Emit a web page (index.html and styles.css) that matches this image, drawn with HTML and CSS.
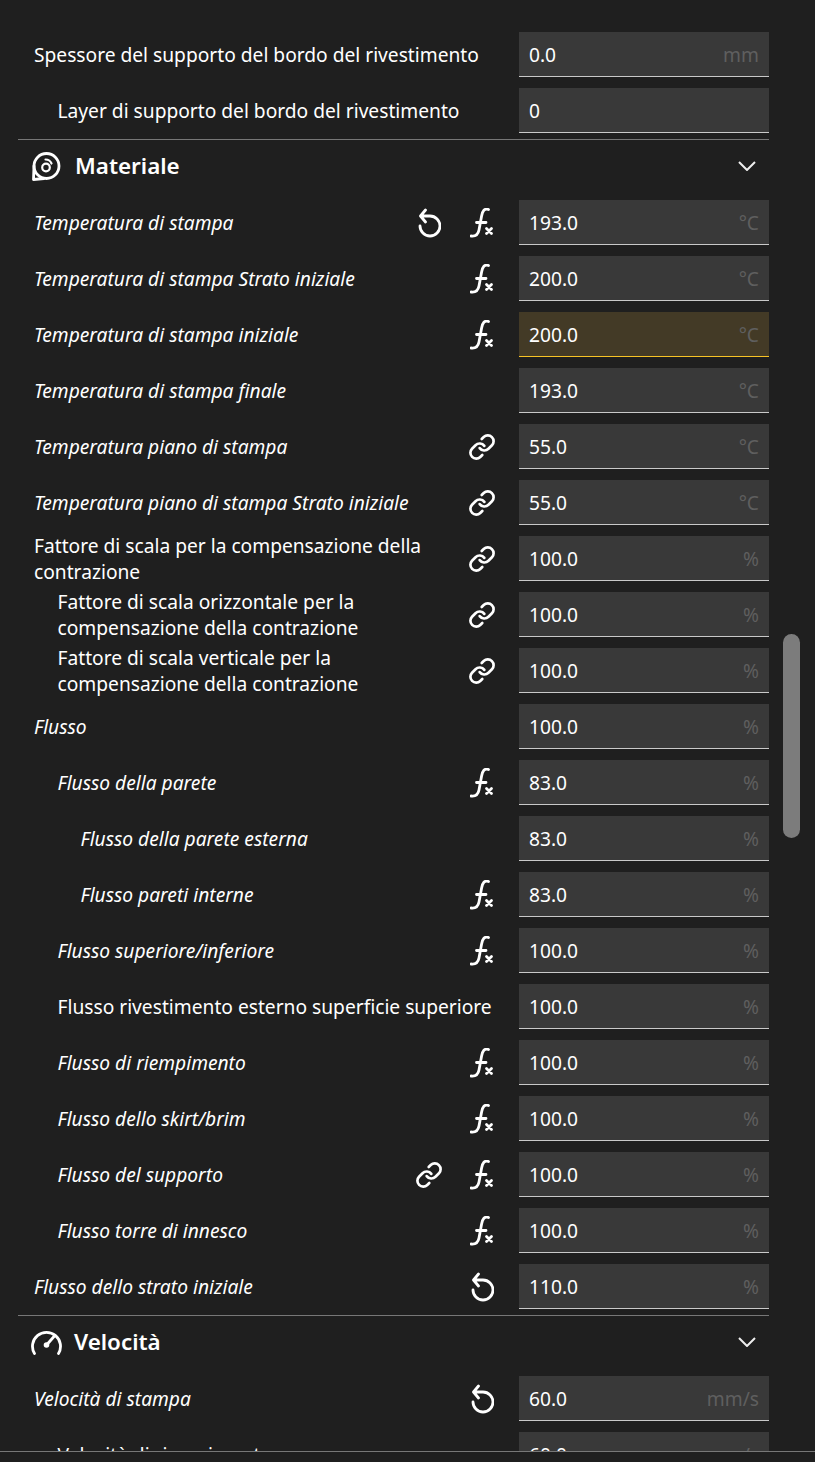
FILE: index.html
```html
<!DOCTYPE html>
<html lang="it">

<head>
    <meta charset="UTF-8">
    <meta name="viewport" content="width=device-width, initial-scale=1.0">
    <title>Impostazioni di stampa</title>
    <link rel="stylesheet" href="styles.css">
</head>

<body>
    <svg class="sprites" aria-hidden="true">
        <symbol id="i-reset" viewBox="0 0 24 30">
            <path d="M8.500 2 3.500 8 8.500 14M4 8H13A10 10 0 1 1 3 18" />
        </symbol>
        <symbol id="i-fx" viewBox="0 0 24 30">
            <path d="M18.500 1.500C14.500 0 12.500 3 11.600 8L9 22C8 27 5 28.500 1 28M6.500 14.500H16" />
            <path class="thick" d="M16.500 20.500 21.500 25.500M21.500 20.500 16.500 25.500" />
        </symbol>
        <symbol id="i-link" viewBox="0 0 24 24">
            <path d="M10 13a5 5 0 0 0 7.540.540l3-3a5 5 0 0 0-7.070-7.070l-1.720 1.710" />
            <path d="M14 11a5 5 0 0 0-7.540-.540l-3 3a5 5 0 0 0 7.070 7.070l1.710-1.710" />
        </symbol>
        <symbol id="i-chevron" viewBox="0 0 18 10">
            <path d="M1 1 9 9 17 1" />
        </symbol>
    </svg>

    <main class="panel">
        <div class="row">
            <span class="label">Spessore del supporto del bordo del rivestimento</span>
            <div class="field"><span>0.0</span><span class="unit">mm</span></div>
        </div>
        <div class="row depth-1">
            <span class="label">Layer di supporto del bordo del rivestimento</span>
            <div class="field"><span>0</span></div>
        </div>

        <div class="section-head">
            <svg class="head-icon" viewBox="0 0 32 32">
                <circle cx="16.500" cy="16" r="12.500" />
                <path d="M4 16 3.500 29.500 14 28.500" />
                <circle class="inner" cx="16" cy="17.500" r="3.800" />
                <path class="inner" d="M15.500 9.500C18.500 9.500 20.500 11 21.500 13.500" />
            </svg>
            <span class="head-title">Materiale</span>
            <svg class="chevron"><use href="#i-chevron" /></svg>
        </div>

        <div class="row changed">
            <span class="label">Temperatura di stampa</span>
            <div class="icons">
                <svg class="icon"><use href="#i-reset" /></svg>
                <svg class="icon"><use href="#i-fx" /></svg>
            </div>
            <div class="field"><span>193.0</span><span class="unit">°C</span></div>
        </div>
        <div class="row changed">
            <span class="label">Temperatura di stampa Strato iniziale</span>
            <div class="icons"><svg class="icon"><use href="#i-fx" /></svg></div>
            <div class="field"><span>200.0</span><span class="unit">°C</span></div>
        </div>
        <div class="row changed">
            <span class="label">Temperatura di stampa iniziale</span>
            <div class="icons"><svg class="icon"><use href="#i-fx" /></svg></div>
            <div class="field warning"><span>200.0</span><span class="unit">°C</span></div>
        </div>
        <div class="row changed">
            <span class="label">Temperatura di stampa finale</span>
            <div class="field"><span>193.0</span><span class="unit">°C</span></div>
        </div>
        <div class="row changed">
            <span class="label">Temperatura piano di stampa</span>
            <div class="icons"><svg class="icon link"><use href="#i-link" /></svg></div>
            <div class="field"><span>55.0</span><span class="unit">°C</span></div>
        </div>
        <div class="row changed">
            <span class="label">Temperatura piano di stampa Strato iniziale</span>
            <div class="icons"><svg class="icon link"><use href="#i-link" /></svg></div>
            <div class="field"><span>55.0</span><span class="unit">°C</span></div>
        </div>
        <div class="row">
            <span class="label">Fattore di scala per la compensazione della contrazione</span>
            <div class="icons"><svg class="icon link"><use href="#i-link" /></svg></div>
            <div class="field"><span>100.0</span><span class="unit">%</span></div>
        </div>
        <div class="row depth-1">
            <span class="label">Fattore di scala orizzontale per la compensazione della contrazione</span>
            <div class="icons"><svg class="icon link"><use href="#i-link" /></svg></div>
            <div class="field"><span>100.0</span><span class="unit">%</span></div>
        </div>
        <div class="row depth-1">
            <span class="label">Fattore di scala verticale per la compensazione della contrazione</span>
            <div class="icons"><svg class="icon link"><use href="#i-link" /></svg></div>
            <div class="field"><span>100.0</span><span class="unit">%</span></div>
        </div>
        <div class="row changed">
            <span class="label">Flusso</span>
            <div class="field"><span>100.0</span><span class="unit">%</span></div>
        </div>
        <div class="row changed depth-1">
            <span class="label">Flusso della parete</span>
            <div class="icons"><svg class="icon"><use href="#i-fx" /></svg></div>
            <div class="field"><span>83.0</span><span class="unit">%</span></div>
        </div>
        <div class="row changed depth-2">
            <span class="label">Flusso della parete esterna</span>
            <div class="field"><span>83.0</span><span class="unit">%</span></div>
        </div>
        <div class="row changed depth-2">
            <span class="label">Flusso pareti interne</span>
            <div class="icons"><svg class="icon"><use href="#i-fx" /></svg></div>
            <div class="field"><span>83.0</span><span class="unit">%</span></div>
        </div>
        <div class="row changed depth-1">
            <span class="label">Flusso superiore/inferiore</span>
            <div class="icons"><svg class="icon"><use href="#i-fx" /></svg></div>
            <div class="field"><span>100.0</span><span class="unit">%</span></div>
        </div>
        <div class="row depth-1">
            <span class="label">Flusso rivestimento esterno superficie superiore</span>
            <div class="field"><span>100.0</span><span class="unit">%</span></div>
        </div>
        <div class="row changed depth-1">
            <span class="label">Flusso di riempimento</span>
            <div class="icons"><svg class="icon"><use href="#i-fx" /></svg></div>
            <div class="field"><span>100.0</span><span class="unit">%</span></div>
        </div>
        <div class="row changed depth-1">
            <span class="label">Flusso dello skirt/brim</span>
            <div class="icons"><svg class="icon"><use href="#i-fx" /></svg></div>
            <div class="field"><span>100.0</span><span class="unit">%</span></div>
        </div>
        <div class="row changed depth-1">
            <span class="label">Flusso del supporto</span>
            <div class="icons">
                <svg class="icon link"><use href="#i-link" /></svg>
                <svg class="icon"><use href="#i-fx" /></svg>
            </div>
            <div class="field"><span>100.0</span><span class="unit">%</span></div>
        </div>
        <div class="row changed depth-1">
            <span class="label">Flusso torre di innesco</span>
            <div class="icons"><svg class="icon"><use href="#i-fx" /></svg></div>
            <div class="field"><span>100.0</span><span class="unit">%</span></div>
        </div>
        <div class="row changed">
            <span class="label">Flusso dello strato iniziale</span>
            <div class="icons"><svg class="icon"><use href="#i-reset" /></svg></div>
            <div class="field"><span>110.0</span><span class="unit">%</span></div>
        </div>

        <div class="section-head">
            <svg class="head-icon speed" viewBox="0 0 32 32">
                <path d="M4.500 27.500A14 14 0 1 1 28.500 27.500" />
                <path d="M17 18.500 24 10.500" />
                <circle class="dot" cx="16.500" cy="19" r="2.800" />
            </svg>
            <span class="head-title">Velocità</span>
            <svg class="chevron"><use href="#i-chevron" /></svg>
        </div>

        <div class="row changed">
            <span class="label">Velocità di stampa</span>
            <div class="icons"><svg class="icon"><use href="#i-reset" /></svg></div>
            <div class="field"><span>60.0</span><span class="unit">mm/s</span></div>
        </div>
        <div class="row depth-1">
            <span class="label">Velocità di riempimento</span>
            <div class="field"><span>60.0</span><span class="unit">mm/s</span></div>
        </div>
    </main>

    <div class="scrollbar"></div>
    <footer class="footer"></footer>
</body>

</html>
```

FILE: styles.css
```css
* {
    margin: 0;
    padding: 0;
    box-sizing: border-box;
}

body {
    width: 815px;
    height: 1462px;
    overflow: hidden;
    position: relative;
    background-color: #1f1f1f;
    color: #fff;
    font-family: "Noto Sans", sans-serif;
    font-size: 19.2px;
}

.sprites {
    display: none;
}

.panel {
    height: 1451px;
    overflow: hidden;
    padding: 32px 46px 0 18px;
}

.row {
    display: flex;
    align-items: center;
    height: 45px;
    margin-bottom: 11px;
    padding-left: 16px;
}

.depth-1 {
    padding-left: 39.5px;
}

.depth-2 {
    padding-left: 62.5px;
}

.label {
    flex: 1;
    line-height: 26px;
    min-width: 0;
    margin-right: -20px;
}

.changed .label {
    font-style: italic;
}

.icons {
    display: flex;
    align-items: center;
    gap: 29px;
    margin-left: 49px;
}

.icon {
    width: 24px;
    height: 30px;
    fill: none;
    stroke: #fff;
    stroke-width: 2.8;
    stroke-linecap: round;
    stroke-linejoin: round;
    overflow: visible;
}

.icon .thick {
    stroke-width: 4;
}

.icon.link {
    width: 28px;
    height: 28px;
    margin: 0 -2px;
    stroke-width: 2.3;
}

.field {
    display: flex;
    justify-content: space-between;
    align-items: center;
    flex: none;
    width: 250px;
    height: 45px;
    margin-left: 25px;
    padding: 0 10px;
    background-color: #393939;
    border-bottom: 1px solid #c9c9c9;
}

.field.warning {
    background-color: #433a26;
    border-bottom-color: #f7c325;
}

.unit {
    color: #5f5f5f;
}

.section-head {
    display: flex;
    align-items: center;
    height: 53px;
    margin: -5px 0 8px;
    padding: 0 13px 0 12px;
    border-top: 1px solid #777;
}

.head-icon {
    width: 32px;
    height: 32px;
    margin-right: 13px;
    fill: none;
    stroke: #fff;
    stroke-width: 2.8;
    stroke-linecap: round;
    stroke-linejoin: round;
}

.head-icon .inner {
    stroke-width: 2.2;
}

.head-icon.speed {
    margin-right: 12px;
}

.head-icon .dot {
    fill: #fff;
    stroke: none;
}

.head-title {
    flex: 1;
    margin-top: -2px;
    font-size: 22.4px;
    font-weight: 600;
}

.chevron {
    width: 18px;
    height: 10px;
    fill: none;
    stroke: #eee;
    stroke-width: 2;
}

.scrollbar {
    position: absolute;
    left: 783px;
    top: 634px;
    width: 17px;
    height: 204px;
    border-radius: 9px;
    background-color: #7c7c7c;
}

.footer {
    height: 11px;
    border-top: 1px solid #777;
}
```
